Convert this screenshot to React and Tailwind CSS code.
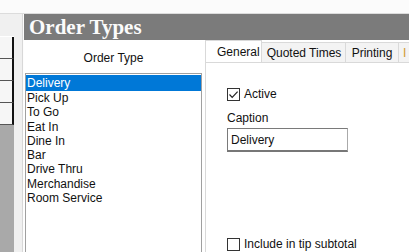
import React from "react";

const items = ["Delivery", "Pick Up", "To Go", "Eat In", "Dine In", "Bar", "Drive Thru", "Merchandise", "Room Service"];

function Check({ checked, label }) {
  return (
    <div className="flex items-center gap-[4px]">
      <div className="w-[13px] h-[13px] border border-[#333] bg-white flex items-center justify-center">
        {checked && (
          <svg width="11" height="11" viewBox="0 0 11 11">
            <path d="M1.5 5.5 L4.2 8.3 L9.6 2.6" fill="none" stroke="#222" strokeWidth="1.2" />
          </svg>
        )}
      </div>
      <span className="text-[12px] leading-[14px] text-[#111]">{label}</span>
    </div>
  );
}

export default function App() {
  return (
    <div className="w-[409px] h-[252px] overflow-hidden bg-white flex flex-col" style={{ fontFamily: '"Liberation Sans", Arial, sans-serif' }}>
      <div className="h-[14px] shrink-0 bg-[#fbfbfb] border-b border-[#dcdcdc]" />
      <div className="flex flex-1 min-h-0">
        {/* left strip with side buttons */}
        <div className="w-[24px] flex shrink-0 border-r border-[#fdfdfd]">
          <div className="w-[14px] flex flex-col">
            <div className="h-[23px] bg-[#f0f0f0] border-b border-[#fff]" />
            {[0, 1, 2, 3].map((i) => (
              <div key={i} className="h-[22px] bg-[#f6f6f6] border-b border-[#555] border-r-2 border-r-[#111]" />
            ))}
            <div className="flex-1 bg-[#a9a9a9]" />
          </div>
          <div className="flex-1 bg-[#f0f0f0] border-r border-[#d8d8d8]" />
        </div>

        <div className="flex-1 flex flex-col min-w-0">
          <div className="h-[26px] shrink-0 bg-[#7b7b7b] pl-[5px] flex items-center">
            <span className="text-[21px] font-bold text-[#fbfbfb] leading-none" style={{ fontFamily: '"Liberation Serif", "Times New Roman", serif' }}>
              Order Types
            </span>
          </div>
          <div className="flex flex-1 min-h-0">
            {/* order type list */}
            <div className="w-[179px] shrink-0 flex flex-col pl-[1px] pr-[1px]">
              <div className="h-[33px] flex items-center justify-center text-[12px] text-[#111] pt-[2px]">Order Type</div>
              <div className="flex-1 border border-[#a0a0a0] border-b-0 pt-[1px] px-[0px]">
                {items.map((it, i) => (
                  <div
                    key={it}
                    className={
                      i === 0
                        ? "h-[16px] leading-[16px] bg-[#0078d7] text-white text-[12px] pl-[1px]"
                        : "h-[14.3px] leading-[14.3px] text-[#111] text-[12px] pl-[1px]"
                    }
                  >
                    {it}
                  </div>
                ))}
              </div>
            </div>

            {/* tabs */}
            <div className="flex-1 flex flex-col pl-[2px] min-w-0">
              <div className="h-[23px] shrink-0 flex items-end border-b border-[#d9d9d9] pt-[1px] overflow-hidden">
                <div className="h-[23px] w-[57px] shrink-0 bg-white border border-b-0 border-[#d9d9d9] text-[12px] text-[#111] flex items-center pl-[11px] -mb-[1px] relative z-10">
                  General
                </div>
                <div className="h-[20px] w-[84px] shrink-0 bg-[#f3f3f3] border-t border-r border-[#d9d9d9] text-[12px] text-[#111] flex items-center justify-center pl-[1px]">
                  Quoted Times
                </div>
                <div className="h-[20px] w-[53px] shrink-0 bg-[#f3f3f3] border-t border-r border-[#d9d9d9] text-[12px] text-[#111] flex items-center justify-center">
                  Printing
                </div>
                <div className="h-[20px] w-[30px] shrink-0 bg-[#f3f3f3] border-t border-[#d9d9d9] text-[12px] text-[#d09a30] flex items-center pl-[4px]">
                  I
                </div>
              </div>
              <div className="flex-1 border-l border-[#d9d9d9] bg-white pl-[21px] pt-[24px] flex flex-col">
                <Check checked label="Active" />
                <div className="text-[12px] text-[#111] mt-[10px] leading-[14px]">Caption</div>
                <div className="mt-[3px] w-[121px] h-[24px] border border-[#7a7a7a] border-r-[#aaa] border-b-2 border-b-[#777] text-[12px] text-[#111] flex items-center pl-[3px]">
                  Delivery
                </div>
                <div className="mt-[85px]">
                  <Check label="Include in tip subtotal" />
                </div>
              </div>
            </div>
          </div>
        </div>
      </div>
    </div>
  );
}
